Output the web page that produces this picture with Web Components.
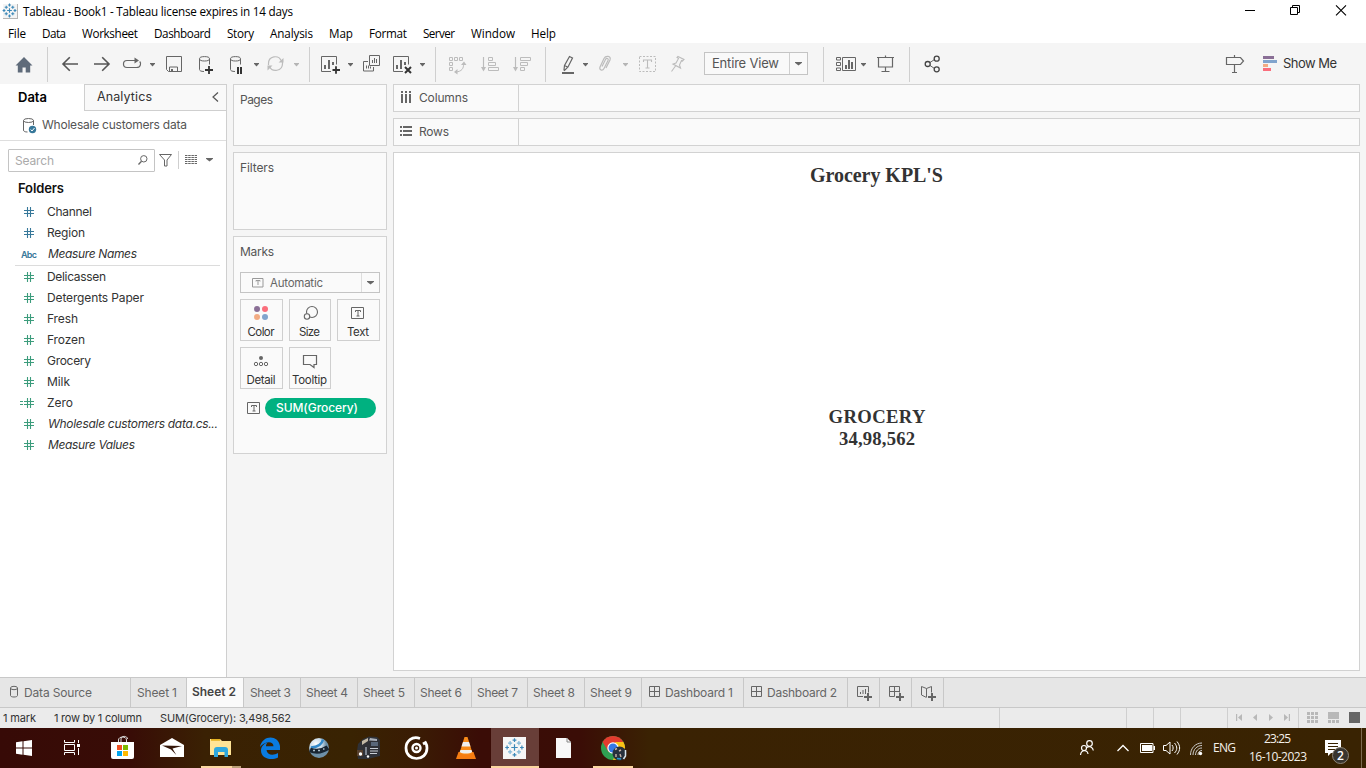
<!DOCTYPE html>
<html lang="en">
<head>
<meta charset="utf-8">
<title>Tableau - Book1</title>
<style>
html,body{margin:0;padding:0}
body{width:1366px;height:768px;overflow:hidden;background:#f5f5f5;font-family:Inter,"Open Sans",sans-serif;font-size:12px;color:#333}
</style>
</head>
<body>
<tableau-app></tableau-app>
<script>
function define(name, css, html, extra) {
  const tpl = document.createElement('template');
  tpl.innerHTML = '<style>:host{display:block;box-sizing:border-box}svg{display:block;flex:none;overflow:visible}*{box-sizing:border-box}' + css + '</style>' + html;
  customElements.define(name, class extends HTMLElement {
    constructor() {
      super();
      this.attachShadow({ mode: 'open' }).appendChild(tpl.content.cloneNode(true));
    }
    connectedCallback() { if (extra) extra.call(this, this.shadowRoot); }
  });
}

// A single line of text, tracked so that it fills the width given by "w".
define('fit-text', ':host{display:block;flex:none;white-space:nowrap;height:20px;line-height:20px}span{display:inline-block}', '<span><slot></slot></span>', function (root) {
  const w = +this.getAttribute('w'), n = this.textContent.length;
  if (!w) return;
  this.style.width = w + 'px';
  const s = root.querySelector('span');
  s.style.letterSpacing = '0px';
  const natural = s.getBoundingClientRect().width;
  s.style.letterSpacing = ((w - natural) / Math.max(1, n - 1)).toFixed(3) + 'px';
});

// Items of a row: icons are drawn in window coordinates through their viewBox.
const I = (x, y, w, h, body) => ({ x, y, w, html: m => `<svg width="${w}" height="${h}" viewBox="${x} ${y} ${w} ${h}" style="${m}">${body}</svg>` });
const T = (x, end, cy, text, style = '') => ({ x, y: cy - 10, w: end - x, html: m => `<fit-text w="${end - x}" style="${m};${style}">${text}</fit-text>` });
const V = (x, y, h, c = '#cfcfcf') => ({ x, y, w: 1, html: m => `<i style="${m};width:1px;height:${h}px;background:${c};flex:none"></i>` });
function flow(x0, y0, items) {
  let at = x0;
  return items.map(i => {
    const m = `margin:${i.y - y0}px 0 0 ${i.x - at}px`;
    at = i.x + i.w;
    return i.html(m);
  }).join('');
}
const caret = (x, y = 63, w = 5, c = '#666') => I(x, y, w, 4, `<path d="M${x} ${y}h${w}v.8l${-w / 2} 2.6l${-w / 2} -2.6z" fill="${c}"/>`);
const P = (d, c = '#666', w = 1, more = '') => `<path d="${d}" fill="none" stroke="${c}" stroke-width="${w}" ${more}/>`;
const F = (d, c = '#666') => `<path d="${d}" fill="${c}"/>`;
const ROW = ':host{display:flex;align-items:flex-start;flex:none}';

// Tableau mark made of plus signs.
function logo(cx, cy, k) {
  const cols = ['#3b88b8', '#7fb6d6'];
  const at = [[0, 0, 3.2, 0], [0, -7.4, 1.9, 0], [0, 7.4, 1.9, 0], [-7.4, 0, 1.9, 0], [7.4, 0, 1.9, 0], [-4.4, -4.4, 2.1, 1], [4.4, -4.4, 2.1, 1], [-4.4, 4.4, 2.1, 1], [4.4, 4.4, 2.1, 1]];
  return at.map(([x, y, r, c]) => { x = cx + x * k; y = cy + y * k; r *= k; return P(`M${x - r} ${y}H${x + r}M${x} ${y - r}V${y + r}`, k < .9 ? cols[0] : cols[c], k < .9 ? 1.1 : 1.2 * k); }).join('');
}

define('title-bar', ROW + ':host{height:24px;background:#fff;color:#000;font:11.700px "Open Sans",sans-serif}', flow(0, 0, [
  I(2, 3, 17, 16, F('M3 4h15v15H3z', '#b5b5b5') + F('M3 4h14v14H3z', '#f4f4f4') + logo(9.5, 10.5, .74)),
  T(23, 293, 11, 'Tableau - Book1 - Tableau license expires in 14 days'),
  I(1245, 5, 10, 11, P('M1245 10.5h10', '#000')),
  I(1290, 5, 11, 11, P('M1290.5 7.5h7v7h-7zM1292.5 7.5v-2h7v7h-2', '#000')),
  I(1336, 5, 11, 11, P('M1336 5.3l10 10M1346 5.3l-10 10', '#000', 1.1)),
]));

define('menu-bar', ROW + ':host{height:19px;background:#fff;color:#000;font:11.700px "Open Sans",sans-serif}', flow(0, 24,
  [['File', 8, 26], ['Data', 42, 66], ['Worksheet', 82, 138], ['Dashboard', 154, 211], ['Story', 227, 254], ['Analysis', 270, 313], ['Map', 329, 353], ['Format', 369, 407], ['Server', 423, 455], ['Window', 471, 515], ['Help', 531, 556]].map(([t, a, b]) => T(a, b, 33, t))));

const G = '#bcbcbc', D = '#333';
const drum = x => P(`M${x + 10.5} 64.500V59M${x + .5} 59v10.500c0 1.200 1.500 2 4.500 2`) + `<ellipse cx="${x + 5.5}" cy="58.800" rx="5" ry="2.200" fill="none" stroke="#666"/>`;
const chart = x => P(`M${x + 10} 71.500H${x + .5}V56.500h15v8`) + F(`M${x + 3} 65h2v4h-2zM${x + 7} 60h2v9h-2zM${x + 11} 62h2v3h-2z`);
const sort = (x, r) => P(`M${x + 2.500} 57v13`, G, 1.200) + F(`M${x} 67h5l-2.500 4.500z`, G) + r;
define('tool-bar', ROW + ':host{height:41px;background:#f5f5f5;color:#333;font-size:13px}.sel{display:flex;flex:none;width:104px;height:23px;border:1px solid #c4c4c4;background:#f9f9f9}', flow(0, 43, [
  I(15, 57, 18, 16, F('M15.500 65.500L24 57l8.500 8.500h-2.300V72.500h-4.500v-5h-3.200v5h-4.700v-7z', '#5f6b7a')),
  V(47, 47, 35),
  I(62, 56, 16, 16, P('M78 64H63M69.800 57.200L63 64l6.800 6.800', '#555', 1.6)),
  I(94, 56, 16, 16, P('M94 64h15M102.200 57.200L109 64l-6.800 6.800', '#555', 1.6)),
  I(123, 57, 18, 12, P('M131 60.500h-4c-4.700 0-4.700 7 0 7h9.500c4.500 0 4.700-4.500 3.200-6M129 60.500h8', '#666', 1.200) + F('M134.500 57.500l4.500 3-4.500 3z')),
  caret(150),
  I(166, 56, 16, 16, P('M166.500 56.500h15v15h-13l-2-2zM169.500 71.500v-4.500h8v4.500') + F('M171 69h2v3h-2z')),
  I(199, 56, 14, 18, drum(199) + P('M205 70h8M209 66v8', D, 1.8)),
  I(230, 56, 12, 18, drum(230) + F('M237 67h2v7h-2zM240 67h2v7h-2z', D)),
  caret(254),
  I(267, 56, 17, 16, P('M268.500 65v-1.500c0-7.500 10-9 12.500-3M282.500 62v1.500c0 8-10.500 9-13 3', G, 1.2) + F('M283.500 58v4.500h-5zM267.500 70.500v-5h5z', G)),
  caret(294, 63, 5, '#b5b5b5'),
  V(309, 47, 35),
  I(321, 56, 19, 18, chart(321) + P('M332.500 70h7.500M336 66.200v7.600', D, 1.8)),
  caret(348),
  I(363, 55, 17, 17, P('M368 61.500h-4.500v9.500h10v-4M369.500 55.500h10v10h-10zM372.500 63v-3M374.500 63v-5M376.500 63v-4M366.500 68.500v-3M368.500 68.500v-3M370.500 68.500v-2')),
  I(393, 56, 19, 18, chart(393) + P('M405 67l6 6M411 67l-6 6', D, 2)),
  caret(420),
  V(435, 47, 35),
  I(449, 57, 17, 18, P('M449.500 57.500h3v3h-3zM454.500 57.500h3v3h-3zM459.500 57.500h3v3h-3zM449.500 62.500h3v3h-3zM449.500 67.500h3v3h-3zM463.500 63.500c.5 5-2 8-7.500 8.500', G) + F('M461 65l3-3.500 2.500 3.500zM457.500 69v5.500L454 72z', G)),
  I(481, 57, 18, 15, sort(481, P('M488.500 57.500h4v3h-4zM488.500 62.500h7v3h-7zM488.500 67.500h10v3h-10z', G))),
  I(513, 57, 18, 15, sort(513, P('M520.500 57.500h10v3h-10zM520.500 62.500h7v3h-7zM520.500 67.500h4v3h-4z', G))),
  V(545, 47, 35),
  I(562, 55, 12, 19, P('M569.500 56.500l3 1.500-4.500 9-3.500 3.500-.5-.5.500-4.500zM564.500 65.500l3.500 1.700', '#666', 1.200) + F('M562 72h12v2h-12z')),
  caret(583),
  I(599, 55, 12, 17, P('M602 66.500l3.500-7c1-2 3.500-1 2.500 1l-4 8c-1.500 3-5 1.500-4-1.500l4-8.500c1.500-3 7.500-3 6 1.500l-4 8', G, 1.200)),
  caret(623, 63, 5, '#b5b5b5'),
  I(639, 56, 17, 16, P('M639.500 56.500h16v15h-16z', G, 1, 'stroke-dasharray="2 1.500"') + P('M643.500 62v-2h8v2M647.500 60v8M645.500 68h4', G, 1.100)),
  I(671, 56, 14, 16, P('M678 56.500l6 3-1.500 1.500-1-.5-2 4.500 1 3-7.500-4 3-1 2.500-4.500-1.500-1zM675.500 66l-4 5.500', G, 1.100)),
  { x: 704, y: 52, w: 104, html: m => `<div class="sel" style="${m}">${flow(705, 53, [T(712, 779, 63, 'Entire View', 'color:#555;font-size:13px'), V(789, 53, 21), caret(795, 62, 7)])}</div>` },
  V(823, 47, 35),
  I(836, 57, 20, 15, P('M836.500 57.500h4v2.500h-4zM836.500 62.500h4v3h-4zM836.500 68h4v2.500h-4zM842.500 57.500h13v13h-13z') + F('M845 65h2v4h-2zM848 60h2v9h-2zM851 62h2v7h-2z')),
  caret(861),
  I(877, 55, 17, 17, P('M877 57.500h17M878.500 57.500v9.500h14v-9.500M885.500 55.500v2M885.500 67v4.500M881.500 71.500h8', '#666', 1.2)),
  V(909, 47, 35),
  I(925, 55, 15, 17, P('M930 62.500l4.500-3M930 65.500l4.500 3') + '<g fill="none" stroke="#444" stroke-width="1.300"><circle cx="927.700" cy="64" r="2.500"/><circle cx="936.700" cy="58.700" r="2.500"/><circle cx="936.700" cy="69.300" r="2.500"/></g>'),
  I(1226, 55, 18, 18, P('M1226.500 57.500h14l3 3.500-3 3.500h-14zM1234.500 55v2.500M1234.500 64.500v8M1232 72.500h5', '#666', 1.200)),
  I(1263, 56, 15, 15, F('M1263 56h11v3h-11z', '#8a6f96') + F('M1263 60h14v3h-14z', '#81a4cd') + F('M1263 64h5v3h-5z', '#f2ab83') + F('M1263 68h8v3h-8z', '#fa6e7c')),
  T(1283, 1337, 63, 'Show Me', 'color:#333'),
]));

// Data pane
const hash = (y, c, calc) => I(20, y - 6, 14, 11, P(`M24 ${y - 1.500}h10M24 ${y + 1.500}h10M27.500 ${y - 5}v10M30.500 ${y - 5}v10`, c, 1.100) + (calc ? P(`M20 ${y - 1.500}h3M20 ${y + 1.500}h3`, c) : ''));
const field = (y, t, e, kind, it) => `<div class="r">${flow(0, y - 10, [kind === 'abc' ? T(21, 37, y + 1, 'Abc', 'color:#37789a;font-size:9px;font-weight:600') : hash(y, kind === 'dim' ? '#37789a' : '#3c9c7c', kind === 'calc'), T(it ? 48 : 47, e, y, t, it ? 'font-style:italic' : '')])}</div>`;
define('data-pane', `:host{width:227px;background:#fff;border-right:1px solid #cfcfcf;color:#333;flex:none}
.tabs,.ds,.search,.r{display:flex;align-items:flex-start}
.tabs{height:27px}.off{display:flex;align-items:flex-start;width:142px;height:27px;background:#f9f9f9;border:solid #cfcfcf;border-width:1px 0 1px 1px;flex:none}
.on{display:flex;width:84px;flex:none;font-weight:600;color:#000}
.ds{height:30px;border-bottom:1px solid #dedede}.search{height:37px}
.box{display:flex;align-items:flex-start;width:147px;height:23px;border:1px solid #c4c4c4;border-radius:1px;flex:none}
.h{height:24px;display:flex;font-weight:600;color:#111}.r{height:21px}
hr{border:0;margin:0 6px 1px 15px;height:1px;background:#dcdcdc}`,
`<div class="tabs"><div class="on">${flow(0, 84, [T(18, 47, 97, 'Data', 'font-size:13px')])}</div><div class="off">${flow(85, 85, [T(97, 152, 97, 'Analytics', 'font-size:12.500px'), I(212, 92, 7, 10, P('M218 92.500l-5 4.500 5 4.500', '#555', 1.200))])}</div></div>
<div class="ds">${flow(0, 111, [I(23, 118, 14, 15, P('M33.500 125v-4.500M23.500 120.500v9.500c0 1.500 1.500 2 4 2') + '<ellipse cx="28.500" cy="120.500" rx="5" ry="2" fill="none" stroke="#666"/><circle cx="32.500" cy="129.500" r="3.700" fill="#37789a"/>' + P('M30.700 129.500l1.300 1.500 2.500-3', '#fff')), T(42, 187, 125, 'Wholesale customers data', 'color:#555')])}</div>
<div class="search">${flow(0, 141, [{ x: 8, y: 149, w: 147, html: m => `<div class="box" style="${m}">${flow(9, 150, [T(15, 54, 161, 'Search', 'color:#aaa'), I(138, 155, 10, 10, '<circle cx="143.800" cy="158.800" r="3.200" fill="none" stroke="#666"/>' + P('M141.500 161.300l-3 3.200', '#666', 1.300))])}</div>` },
 I(159, 154, 13, 13, P('M159.500 154.500h12l-4.500 5.500v6h-2.500v-6z')), V(178, 151, 18),
 I(185, 155, 12, 10, P('M185 155.500h12M185 157.500h12M185 159.500h12M185 161.500h12M185 163.500h12', '#666', 1, 'stroke-dasharray="2.500 .7"')), caret(206, 158, 7)])}</div>
<div class="h">${flow(0, 178, [T(18, 64, 188, 'Folders', 'font-size:13px')])}</div>
` + field(212, 'Channel', 92, 'dim') + field(233, 'Region', 85, 'dim') + field(254, 'Measure Names', 137, 'abc', 1) + '<hr>' +
  [['Delicassen', 106], ['Detergents Paper', 144], ['Fresh', 78], ['Frozen', 85], ['Grocery', 91], ['Milk', 70], ['Zero', 73], ['Wholesale customers data.cs...', 218], ['Measure Values', 135]].map(([t, e], i) => field(277 + 21 * i, t, e, i === 6 ? 'calc' : 'm', i > 6)).join(''));

// Cards
define('side-card', ':host{width:154px;border:1px solid #d2d2d2;background:#fafafa;flex:none;color:#555}.t{display:flex;padding:5px 0 0 6px}', '<div class="t"><slot name="title"></slot></div><slot></slot>');
define('shelf-row', ':host{display:flex;height:28px;border:1px solid #d2d2d2;background:#fafafa;flex:none;color:#555}.n{display:flex;align-items:flex-start;width:125px;height:26px;border-right:1px solid #d2d2d2}', '<div class="n"><slot></slot></div>');
define('mark-button', ':host{width:43px;height:42px;border:1px solid #cfcfcf;background:#fafafa;display:flex;flex-direction:column;align-items:center;color:#333;font-size:11.500px;padding-right:1px}::slotted(fit-text){margin-top:2px}', '<slot></slot>');
const tbox = (x, y, c = '#666') => P(`M${x + .5} ${y + .5}h12v11h-12zM${x + 4.500} ${y + 5}v-1.500h5v1.500M${x + 7} ${y + 3.500}v5.500M${x + 5.500} ${y + 9}h3`, c);
const btn = (body, w, label) => `<mark-button><svg width="40" height="20" viewBox="0 0 40 20">${body}</svg><fit-text w="${w}">${label}</fit-text></mark-button>`;
const dot = (x, y, c) => `<circle cx="${x}" cy="${y}" r="3" fill="${c}"/>`;
define('marks-panel', `:host{padding:10px 6px 0}.sel{display:flex;align-items:flex-start;width:140px;height:21px;border:1px solid #c4c4c4}
.g{display:grid;grid-template-columns:43px 42px 43px;gap:6px;margin-top:6px}mark-button{width:auto}
.p{display:flex;margin:9px 0 0 7px;gap:5px}.pill{display:flex;width:111px;height:20px;border-radius:10px;background:#00b180;color:#fff;padding-left:11px;font-weight:500}`,
`<div class="sel">${flow(241, 273, [I(252, 278, 12, 10, P('M252.500 278.500h10.500v8.500h-10.500zM256 281.500v-1h4v1M258 280.500v4.500', '#999')), T(270, 323, 283, 'Automatic', 'color:#666;font-size:11.500px'), V(361, 273, 19, '#ddd'), caret(367, 281, 7)])}</div>
<div class="g">${btn(dot(16, 9, '#8a6f96') + dot(24, 9, '#fa6e7c') + dot(16, 17, '#f2ab83') + dot(24, 17, '#81a4cd'), 27, 'Color')}${btn('<circle cx="22" cy="12" r="5.500" fill="none" stroke="#666" stroke-width="1.100"/><circle cx="17" cy="16.500" r="2.700" fill="#fafafa" stroke="#666" stroke-width="1.100"/>', 21, 'Size')}${btn(tbox(13, 7), 22, 'Text')}
${btn('<circle cx="20" cy="10" r="2" fill="#666"/><g fill="none" stroke="#666"><circle cx="15" cy="16" r="1.700"/><circle cx="20" cy="16" r="1.700"/><circle cx="25" cy="16" r="1.700"/></g>', 29, 'Detail')}${btn(P('M13.500 7.500h13v9h-2.500v3l-4-3h-6.500z', '#666', 1.200), 35, 'Tooltip')}</div>
<div class="p"><svg width="13" height="20" viewBox="0 0 13 20">${tbox(0, 4)}</svg><div class="pill"><fit-text w="82">SUM(Grocery)</fit-text></div></div>`);
define('card-column', ':host{display:flex;flex-direction:column;gap:6px;padding-left:6px;width:160px;flex:none}',
`<side-card style="height:62px"><fit-text slot="title" w="33">Pages</fit-text></side-card>
<side-card style="height:78px"><fit-text slot="title" w="34">Filters</fit-text></side-card>
<side-card style="height:218px"><fit-text slot="title" w="34">Marks</fit-text><marks-panel></marks-panel></side-card>`);
define('sheet-view', ':host{flex:1;background:#fff;border:1px solid #d2d2d2;display:flex;flex-direction:column;align-items:center;font:700 18.670px "Liberation Serif",serif;color:#333}.a{margin-top:12px;font-size:20px}.b{margin:222px 0 0 1px}.c{margin:2px 0 0 1px}',
'<fit-text class="a" w="133">Grocery KPL\'S</fit-text><fit-text class="b" w="97">GROCERY</fit-text><fit-text class="c" w="76">34,98,562</fit-text>');
define('work-area', ':host{display:flex;flex-direction:column;gap:6px;flex:1;margin:0 6px 6px}',
`<shelf-row>${flow(394, 85, [I(400, 91, 12, 12, F('M401 91h2v2h-2zM405 91h2v2h-2zM409 91h2v2h-2zM401 94h2v9h-2zM405 94h2v9h-2zM409 94h2v9h-2z')), T(419, 468, 98, 'Columns')])}</shelf-row>
<shelf-row>${flow(394, 119, [I(400, 126, 12, 10, F('M400 126h2v2h-2zM400 130h2v2h-2zM400 134h2v2h-2zM403 126h9v2h-9zM403 130h9v2h-9zM403 134h9v2h-9z')), T(419, 449, 132, 'Rows')])}</shelf-row><sheet-view></sheet-view>`);

// Sheet tabs
define('sheet-tab', ':host{display:flex;align-items:flex-start;height:29px;border-right:1px solid #c8c8c8;flex:none}:host([active]){background:#fafafa;color:#444;font-weight:600}', '<slot></slot>');
const tab = (a, b, items, act) => `<sheet-tab ${act ? 'active' : ''} style="width:${b - a}px">${flow(a, 678, items)}</sheet-tab>`;
const grid4 = x => P(`M${x + .5} 686.500h10v10h-10zM${x + 5.500} 686.500v10M${x + .5} 691.500h10`);
const plus = x => P(`M${x} 697h8M${x + 4} 693v8`, '#666', 2);
define('tab-strip', ':host{display:flex;height:31px;background:#e6e6e6;border:solid #c8c8c8;border-width:1px 0;color:#666;flex:none}',
  tab(0, 131, [I(9, 686, 9, 12, P('M10.500 688v7.500c0 2 7 2 7 0v-7.500') + '<ellipse cx="14" cy="688" rx="3.500" ry="1.700" fill="none" stroke="#666"/>'), T(24, 92, 693, 'Data Source')]) +
  [[131, 187, 137, 177], [187, 244, 192, 236], [244, 301, 250, 291], [301, 358, 306, 348], [358, 415, 363, 405], [415, 472, 420, 462], [472, 528, 477, 518], [528, 585, 533, 575], [585, 642, 590, 632]].map(([a, b, c, d], i) => tab(a, b, [T(c, d, i === 1 ? 692 : 693, 'Sheet ' + (i + 1))], i === 1)).join('') +
  tab(642, 744, [I(649, 686, 11, 11, grid4(649)), T(665, 733, 693, 'Dashboard 1')]) +
  tab(744, 848, [I(751, 686, 11, 11, grid4(751)), T(767, 837, 693, 'Dashboard 2')]) +
  tab(848, 880, [I(857, 686, 15, 15, P('M863 696.500h-5.500v-10h11v6M860.500 694v-2M863 694v-4M865.500 694v-5') + plus(864))]) +
  tab(880, 912, [I(889, 686, 15, 15, P('M894.500 696.500h-5v-10h10v6M894.500 686.500v10M889.500 691.500h10') + plus(896))]) +
  tab(912, 944, [I(921, 686, 15, 15, P('M926.500 697v-8.500l-5-2v8.500l5 2.500M926.500 688.500l5-2v6') + plus(928))]));

const L = '#b8b8b8';
define('status-bar', ROW + ':host{height:20px;background:#ebebeb;color:#333;font-size:11px}', flow(0, 708, [
  T(3, 36, 718, '1 mark'), T(54, 142, 718, '1 row by 1 column'), T(160, 291, 718, 'SUM(Grocery): 3,498,562'),
  V(999, 708, 20), V(1126, 708, 20), V(1153, 708, 20), V(1180, 708, 20), V(1227, 708, 20),
  I(1236, 714, 6, 7, F('M1236 714h1.200v7h-1.200zM1242 714v7l-4-3.500z', L)), I(1253, 714, 4, 7, F('M1257 714v7l-4-3.500z', L)),
  I(1269, 714, 4, 7, F('M1269 714v7l4-3.500z', L)), I(1284, 714, 6, 7, F('M1284 714v7l4-3.500zM1288.800 714h1.200v7h-1.200z', L)), V(1298, 708, 20),
  I(1307, 712, 11, 11, F([0, 4, 8].map(a => [0, 4, 8].map(b => `M${1307 + a} ${712 + b}h3v3h-3z`).join('')).join(''), L)),
  I(1328, 712, 11, 11, F('M1328 712h11v7h-11zM1328 720h3v3h-3zM1332 720h3v3h-3zM1336 720h3v3h-3z', L)),
  I(1349, 712, 11, 11, F('M1349 712h11v11h-11z', '#666')),
]));

// Windows taskbar
const W = '#fff';
define('task-bar', ROW + ':host{height:40px;background:linear-gradient(90deg,#370a06 0,#380c06 130px,#3a2103 205px,#392302 350px,#3a1b04 420px,#3a0c06 480px,#3a0d06 580px,#3a2203 650px,#392302 100%);color:#f4f0ea;font:12px "Open Sans",sans-serif}', flow(0, 728, [
  I(16, 740, 16, 16, F('M16 742.200l6.500-.9v6.200H16zM23.500 741.200l8.500-1.200v7.500h-8.500zM16 748.500h6.500v6.200L16 753.800zM23.500 748.500H32v7.500l-8.500-1.200z', W)),
  I(64, 740, 16, 16, P('M64.500 740v2.500h10V740M64.500 755v-2.500h10v2.500M64.500 744.500h10v6h-10zM78.500 740v3M78.500 748v7', W) + F('M77 744h3v3h-3z', W)),
  I(111, 736, 23, 23, F('M111 742h23v15q0 2-2 2h-19q-2 0-2-2z', W) + P('M118.500 742v-2c0-4 8-4 8 0v2M121 742v-3c0-3.500 6.500-3.500 6.500 0', '#ddd') + F('M117 745h5v5h-5z', '#f25022') + F('M123 745h5v5h-5z', '#7fba00') + F('M117 751h5v5h-5z', '#00a4ef') + F('M123 751h5v5h-5z', '#ffb900')),
  I(160, 738, 24, 19, F('M160 745l12-7 12 7v12h-24z', W) + F('M162 745.500l20 .5-9.500 2.500 3.800 6.500-5.300-5.500z', '#35170a')),
  { x: 201, y: 728, w: 40, html: m => `<svg width="40" height="40" viewBox="201 728 40 40" style="${m}">${F('M210 739h10l2 2h9v14h-21z', '#ffe496') + F('M211 739h9v1.800h-9z', '#e6b322') + F('M214 757v-7q0-3 3-3h8q3 0 3 3v7h-3.500v-5h-6.500v5z', '#2ea8df') + F('M201 766h31v2h-31z', '#fbd7a0') + F('M232 766h9v2h-9z', '#bba078')}</svg>` },
  I(260, 737, 20, 22, F('M260 747c2-12 18-13 20-1v4h-13.500c.5 5 6.500 6 11.500 3v4.500c-7 3.500-17 1-17-7 0-4 3-7 6.500-8-1.200 1.500-1.500 2.500-1.500 3.700h7.500c0-6-9.500-5-13.500.8z', '#0a7be0')),
  I(309, 738, 22, 22, '<defs><radialGradient id="s" cx=".35" cy=".3"><stop offset="0" stop-color="#fff"/><stop offset=".6" stop-color="#c9dbe8"/><stop offset="1" stop-color="#6d90a8"/></radialGradient></defs><circle cx="319" cy="748" r="10" fill="url(#s)"/>' + P('M323 739.500c-1 5-5 7.500-12 8', '#3389c9', 2.500) + P('M310 750c6 2 13 1 18-2.500', '#182532', 5) + P('M313 750.500h2M318 750.500h2M323 749h1.500', '#acbfcb', 1.500)),
  I(356, 736, 25, 24, F('M358 744l5-5 6-2.500 8 .5 3 3v16l-12 3h-10l-1-8z', '#2f3137') + F('M362 741l6-3v3l-6 4z', '#c3b9a6') + F('M370 738l7 1v2l-8-.5z', '#aab0ba') + F('M371 742h7v4h-7z', '#59677a') + P('M370 748.500h8M370 751h8M370 753.500h7', '#c9ced6') + F('M357 750h6v6h-6z', '#57402e') + P('M366 747v8', '#9aa1ac', 1.500) + '<circle cx="360.500" cy="754" r="1.700" fill="#fff"/><circle cx="368" cy="756.500" r="1.200" fill="#fff"/>'),
  I(404, 736, 26, 24, P('M420 738.500c-8-3-14 3-14 9.500 0 14 21 14 21 0 0-2-.5-4-1.500-5.500l-2.500 1.500', W, 2.700) + '<circle cx="416.500" cy="748" r="4" fill="none" stroke="#fff" stroke-width="2.400"/><circle cx="416.500" cy="748" r="1.500" fill="#fff"/>'),
  I(456, 736, 20, 23, F('M458.500 752h15l2.500 7h-20z', '#f57c12') + F('M464.500 737h3l5 16c-3 2-10 2-13 0z', '#f88b19') + F('M463 742h6l1.500 4.500h-9zM460.500 750h11l.7 2c-3 2-9.500 2-12.500 0z', '#efefef')),
  { x: 491, y: 728, w: 48, html: m => `<svg width="48" height="40" viewBox="491 728 48 40" style="${m}">${F('M491 728h48v38h-48z', '#683e38') + F('M491 766h48v2h-48z', '#fbd7a0') + F('M503 737h23v22h-23z', '#f6f6f6') + logo(514.5, 747.5, 1)}</svg>` },
  I(556, 738, 16, 21, F('M556 738h11l4 4v16h-15z', '#f8f8f8') + P('M567 738v4h4', '#888')),
  { x: 593, y: 728, w: 40, html: m => `<svg width="40" height="40" viewBox="593 728 40 40" style="${m}"><circle cx="613" cy="748" r="12" fill="#2fa152"/><path d="M602.600 742a12 12 0 0 1 20.800 0l-10.400 2z" fill="#e33b2e"/><path d="M602.600 742l6 10 4.400-8 10.400-2z" fill="#e33b2e"/><path d="M623.400 742a12 12 0 0 1-10.400 18l5-12-3-6z" fill="#fbc116"/><circle cx="613" cy="748" r="5.700" fill="#fff"/><circle cx="613" cy="748" r="4.500" fill="#3578e5"/><circle cx="619.500" cy="753.500" r="7" fill="#27303c"/>${P('M615 749.500l2-1M619 751l2-1M616 754v3M620 754l1 3', '#c9b5ac', 1.400) + P('M625.500 750v6l-2 3', '#d9e6ee', 1.500) + P('M617 758.500l4 .5', '#2498cd', 1.700) + F('M593 766h40v2h-40z', '#fbd7a0')}</svg>` },
  I(1080, 739, 15, 17, '<circle cx="1089.500" cy="743.500" r="2.800" fill="none" stroke="#fff" stroke-width="1.200"/><circle cx="1084" cy="748" r="2.500" fill="none" stroke="#fff" stroke-width="1.200"/>' + P('M1080.500 755c.5-5.500 7-5.500 7.500-1M1087 747.500c2-2 6-.5 6.300 3', W, 1.200)),
  I(1117, 744, 12, 8, P('M1117.500 751l5.500-5.500 5.500 5.500', W, 1.300)),
  I(1140, 743, 15, 11, P('M1140.500 743.500h12.500v9h-12.500z', W) + F('M1142 745h10v6h-10zM1153.500 746h1.500v4h-1.500z', W)),
  I(1163, 741, 17, 15, P('M1163.500 745.500h2.500l4-3.500v12l-4-3.500h-2.500zM1172 745c1.500 2 1.500 4 0 6M1174.500 743c3 3.500 3 7 0 10M1177 741.500c3.500 4.500 3.500 8.500 0 13', W)),
  I(1190, 742, 13, 14, P('M1190.500 755c0-7 5-12 11.500-12M1193 755c0-5.500 4-9.500 9-9.500M1195.500 755c0-4 3-7 6.500-7M1198 755c0-2.500 1.500-4.500 4-4.500', '#ccc', 1) + '<circle cx="1200.500" cy="753.500" r="1.700" fill="#fff"/>'),
  T(1213, 1236, 748, 'ENG'),
  { x: 1249, y: 728, w: 58, html: m => `<div style="${m};width:58px;flex:none"><fit-text w="27" style="margin:1px 0 0 15px;height:18px">23:25</fit-text><fit-text w="58" style="margin-top:0">16-10-2023</fit-text></div>` },
  I(1325, 739, 24, 25, F('M1325 740h16v13h-10l-3 3v-3h-3z', W) + P('M1328 743.500h10M1328 746.500h10M1328 749.500h7', '#392302') + '<circle cx="1340.500" cy="755.500" r="8" fill="#39352f" stroke="#8d8578"/><text x="1340.500" y="760" text-anchor="middle" fill="#fff" font-family="Open Sans" font-size="12" font-weight="600">2</text>'),
  V(1361, 728, 40, '#7c6b50'),
]));

define('tableau-app', ':host{display:flex;flex-direction:column;width:1366px;height:768px;background:#f5f5f5}.m{display:flex;height:593px;flex:none}',
  '<title-bar></title-bar><menu-bar></menu-bar><tool-bar></tool-bar><div class="m"><data-pane></data-pane><card-column></card-column><work-area></work-area></div><tab-strip></tab-strip><status-bar></status-bar><task-bar></task-bar>');
</script>
</body>
</html>
